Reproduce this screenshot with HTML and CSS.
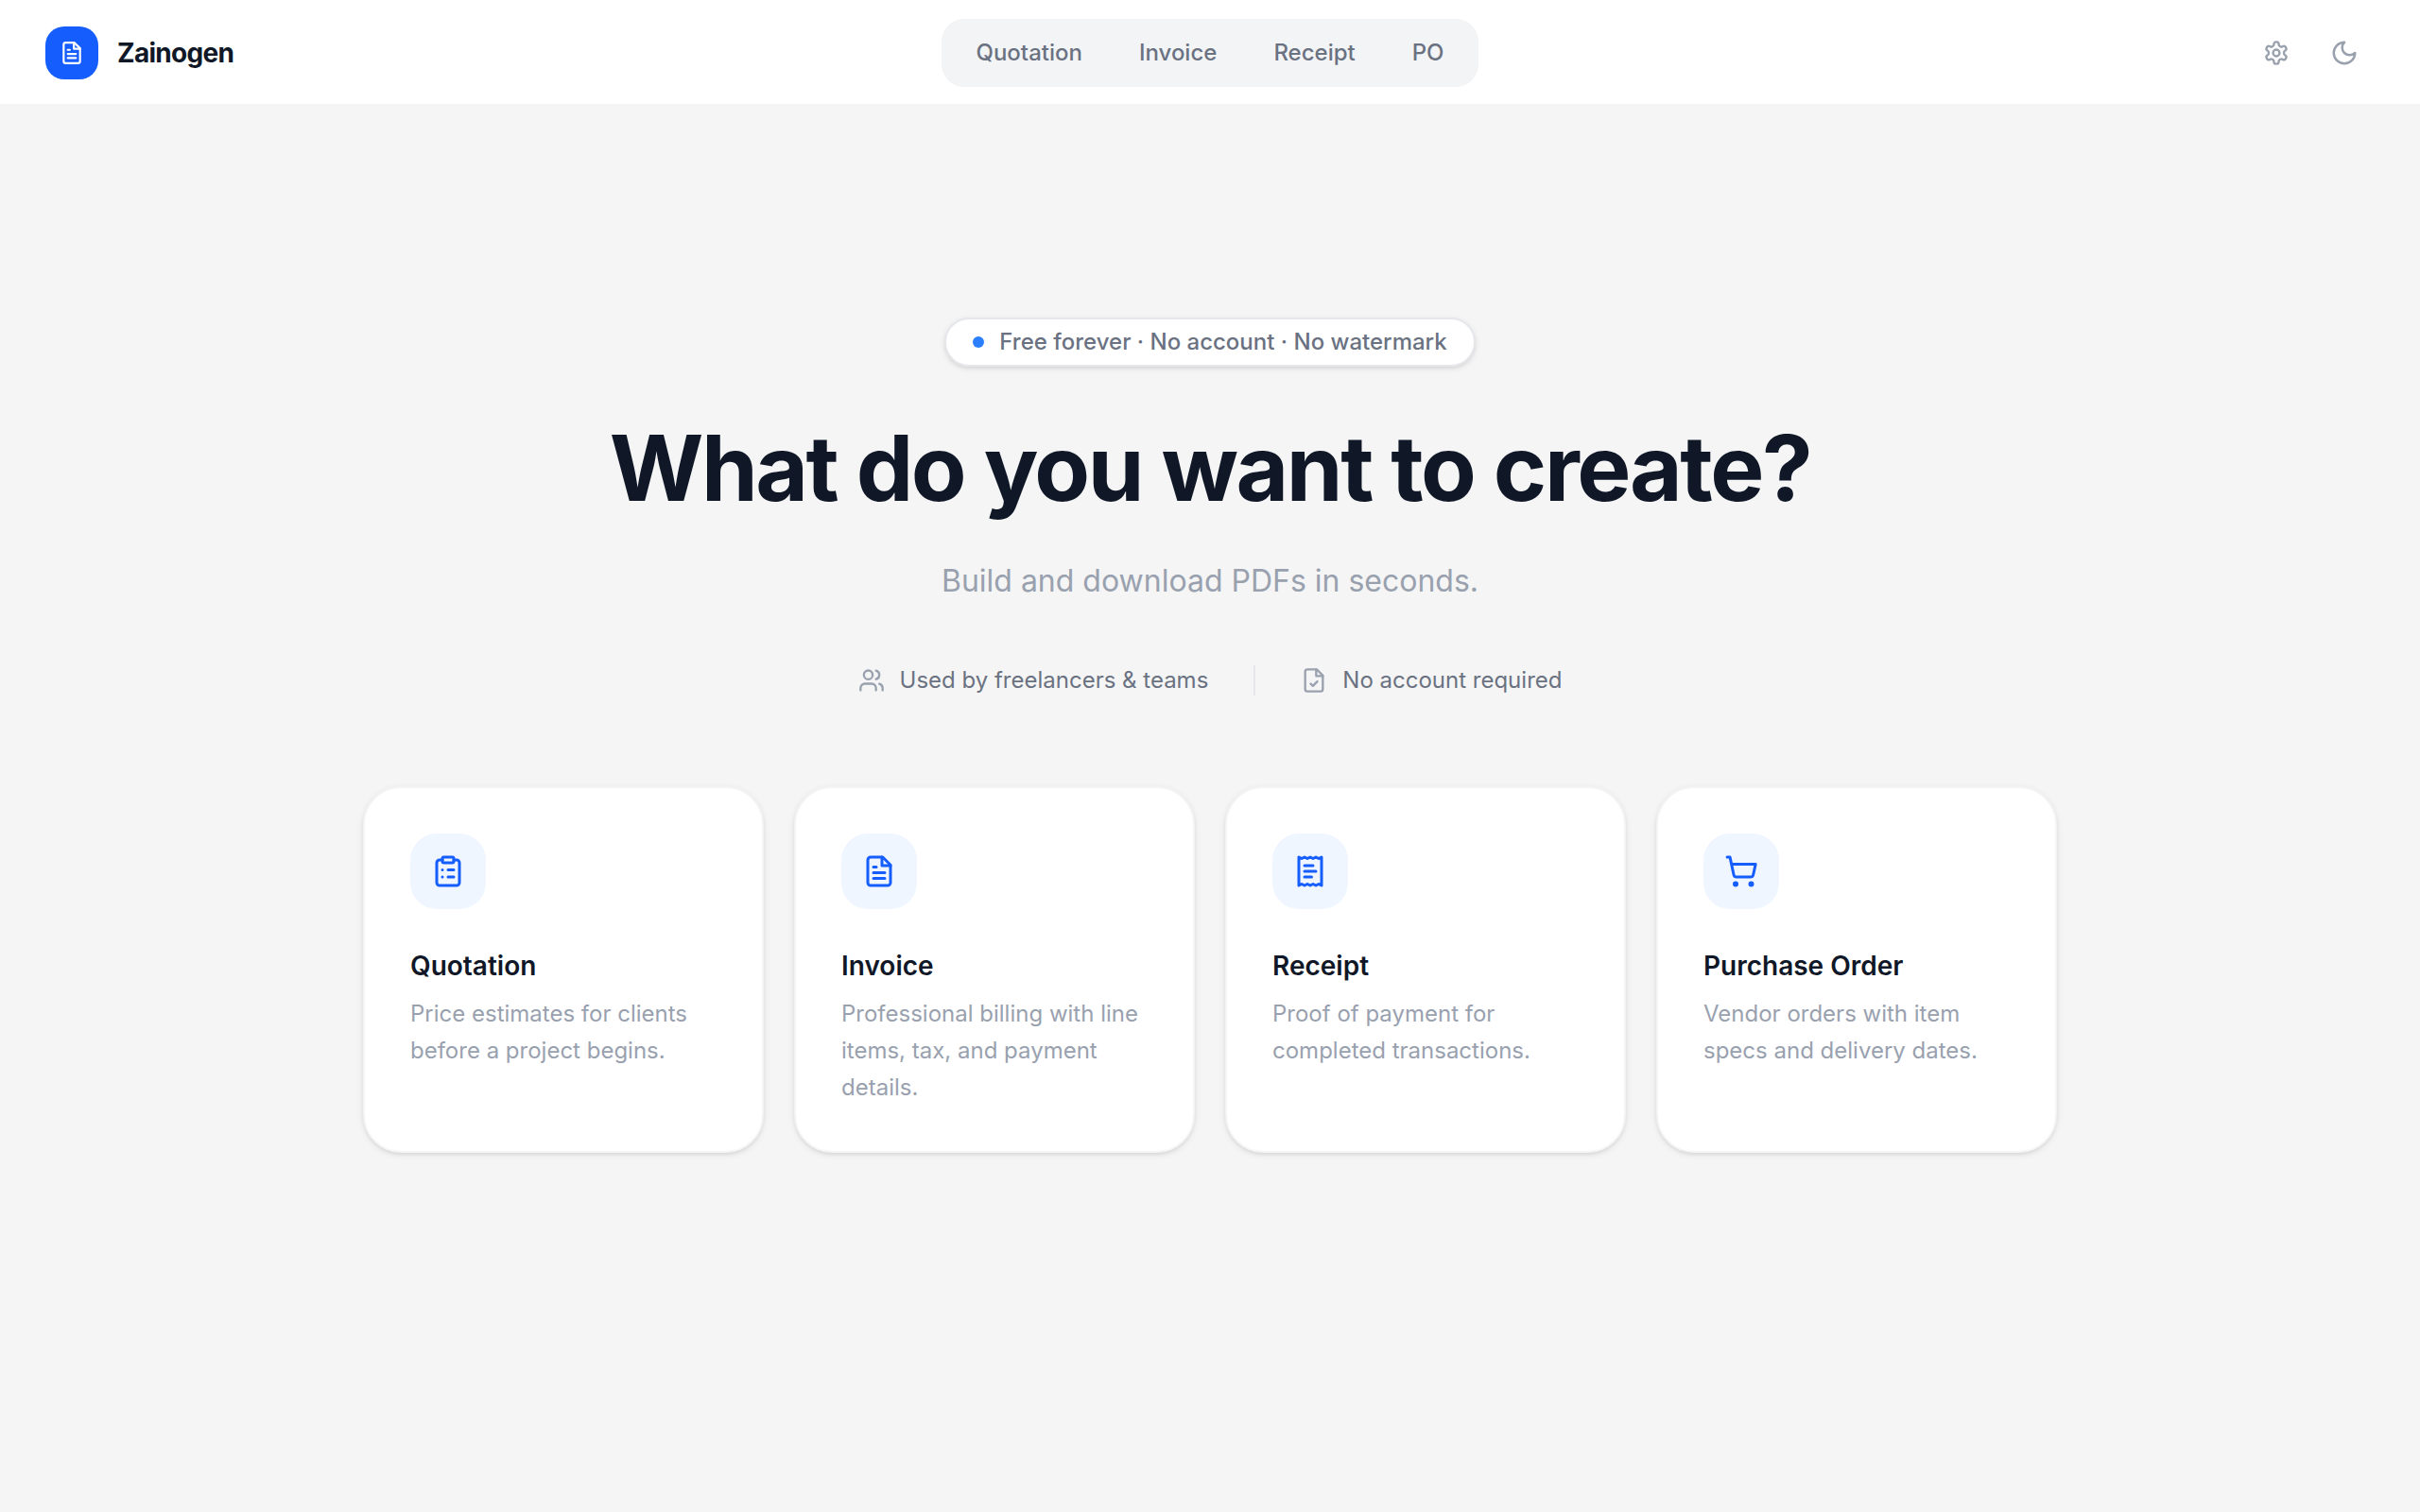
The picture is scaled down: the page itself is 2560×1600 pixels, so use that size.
FILE: index.html
```html
<!DOCTYPE html>
<html lang="en">
<head>
<meta charset="utf-8">
<meta name="viewport" content="width=device-width, initial-scale=1">
<title>Zainogen</title>
<link rel="stylesheet" href="styles.css">
</head>
<body>
<header class="header">
  <a class="brand" href="#">
    <span class="brand-mark">
      <svg class="icon icon-brand" viewBox="0 0 24 24" aria-hidden="true"><path d="M14.5 2H6a2 2 0 0 0-2 2v16a2 2 0 0 0 2 2h12a2 2 0 0 0 2-2V7.5L14.5 2z"/><path d="M14 2v6h6M16 13H8M16 17H8M10 9H8"/></svg>
    </span>
    <span class="brand-name">Zainogen</span>
  </a>
  <nav class="nav">
    <a class="nav-link" href="#quotation">Quotation</a>
    <a class="nav-link" href="#invoice">Invoice</a>
    <a class="nav-link" href="#receipt">Receipt</a>
    <a class="nav-link" href="#po">PO</a>
  </nav>
  <div class="actions">
    <button class="icon-button" type="button" aria-label="Settings">
      <svg class="icon icon-small" viewBox="0 0 24 24" aria-hidden="true"><path d="M12.22 2h-.44a2 2 0 0 0-2 2v.18a2 2 0 0 1-1 1.73l-.43.25a2 2 0 0 1-2 0l-.15-.08a2 2 0 0 0-2.73.73l-.22.38a2 2 0 0 0 .73 2.73l.15.1a2 2 0 0 1 1 1.72v.51a2 2 0 0 1-1 1.74l-.15.09a2 2 0 0 0-.73 2.73l.22.38a2 2 0 0 0 2.73.73l.15-.08a2 2 0 0 1 2 0l.43.25a2 2 0 0 1 1 1.73V20a2 2 0 0 0 2 2h.44a2 2 0 0 0 2-2v-.18a2 2 0 0 1 1-1.73l.43-.25a2 2 0 0 1 2 0l.15.08a2 2 0 0 0 2.73-.73l.22-.39a2 2 0 0 0-.73-2.73l-.15-.08a2 2 0 0 1-1-1.74v-.5a2 2 0 0 1 1-1.74l.15-.09a2 2 0 0 0 .73-2.73l-.22-.38a2 2 0 0 0-2.73-.73l-.15.08a2 2 0 0 1-2 0l-.43-.25a2 2 0 0 1-1-1.73V4a2 2 0 0 0-2-2z"/><circle cx="12" cy="12" r="3"/></svg>
    </button>
    <button class="icon-button" type="button" aria-label="Dark mode">
      <svg class="icon icon-moon" viewBox="0 0 24 24" aria-hidden="true"><path d="M12 3a6 6 0 0 0 9 9 9 9 0 1 1-9-9Z"/></svg>
    </button>
  </div>
</header>

<main class="main">
  <p class="badge"><span class="badge-dot"></span>Free forever · No account · No watermark</p>
  <h1 class="title">What do you want to create?</h1>
  <p class="subtitle">Build and download PDFs in seconds.</p>
  <div class="facts">
    <span class="fact">
      <svg class="icon icon-small" viewBox="0 0 24 24" aria-hidden="true"><path d="M16 21v-2a4 4 0 0 0-4-4H6a4 4 0 0 0-4 4v2"/><circle cx="9" cy="7" r="4"/><path d="M22 21v-2a4 4 0 0 0-3-3.87M16 3.13a4 4 0 0 1 0 7.75"/></svg>
      Used by freelancers &amp; teams
    </span>
    <span class="divider"></span>
    <span class="fact">
      <svg class="icon icon-small" viewBox="0 0 24 24" aria-hidden="true"><path d="M14.5 2H6a2 2 0 0 0-2 2v16a2 2 0 0 0 2 2h12a2 2 0 0 0 2-2V7.5L14.5 2z"/><path d="M14 2v6h6M9 15l2 2 4-4"/></svg>
      No account required
    </span>
  </div>

  <div class="cards">
    <a class="card" href="#quotation">
      <span class="card-icon">
        <svg class="icon icon-card" viewBox="0 0 24 24" aria-hidden="true"><rect width="8" height="4" x="8" y="2" rx="1"/><path d="M16 4h2a2 2 0 0 1 2 2v14a2 2 0 0 1-2 2H6a2 2 0 0 1-2-2V6a2 2 0 0 1 2-2h2M12 11h4M12 16h4M8 11h.01M8 16h.01"/></svg>
      </span>
      <h2 class="card-title">Quotation</h2>
      <p class="card-text">Price estimates for clients before a project begins.</p>
    </a>
    <a class="card" href="#invoice">
      <span class="card-icon">
        <svg class="icon icon-card" viewBox="0 0 24 24" aria-hidden="true"><path d="M14.5 2H6a2 2 0 0 0-2 2v16a2 2 0 0 0 2 2h12a2 2 0 0 0 2-2V7.5L14.5 2z"/><path d="M14 2v6h6M16 13H8M16 17H8M10 9H8"/></svg>
      </span>
      <h2 class="card-title">Invoice</h2>
      <p class="card-text">Professional billing with line items, tax, and payment details.</p>
    </a>
    <a class="card" href="#receipt">
      <span class="card-icon">
        <svg class="icon icon-card" viewBox="0 0 24 24" aria-hidden="true"><path d="M4 2v20l2-1 2 1 2-1 2 1 2-1 2 1 2-1 2 1V2l-2 1-2-1-2 1-2-1-2 1-2-1-2 1ZM14 8H8M16 12H8M13 16H8"/></svg>
      </span>
      <h2 class="card-title">Receipt</h2>
      <p class="card-text">Proof of payment for completed transactions.</p>
    </a>
    <a class="card" href="#po">
      <span class="card-icon">
        <svg class="icon icon-card" viewBox="0 0 24 24" aria-hidden="true"><circle cx="8" cy="21" r="1"/><circle cx="19" cy="21" r="1"/><path d="M2.05 2.05h2l2.66 12.42a2 2 0 0 0 2 1.58h9.78a2 2 0 0 0 1.95-1.57l1.65-7.43H5.12"/></svg>
      </span>
      <h2 class="card-title">Purchase Order</h2>
      <p class="card-text">Vendor orders with item specs and delivery dates.</p>
    </a>
  </div>
</main>
</body>
</html>
```
FILE: styles.css
```css
*, *::before, *::after { box-sizing: border-box; }

body {
  margin: 0;
  min-height: 100vh;
  background: #f5f5f5;
  color: #101828;
  font-family: Inter, "Liberation Sans", sans-serif;
  font-size: 24px;
  line-height: 32px;
}

h1, h2, p { margin: 0; }
a { color: inherit; text-decoration: none; }

.icon {
  display: block;
  flex: none;
  fill: none;
  stroke: currentColor;
  stroke-width: 2;
  stroke-linecap: round;
  stroke-linejoin: round;
}
.icon-brand { width: 26px; height: 26px; }
.icon-small { width: 28px; height: 28px; }
.icon-moon { width: 30px; height: 30px; }
.icon-card { width: 36px; height: 36px; }

.header {
  display: grid;
  grid-template-columns: 1fr auto 1fr;
  align-items: center;
  padding: 20px 48px;
  background: #fff;
  box-shadow: inset 0 -2px #f3f4f6;
}
.brand {
  display: flex;
  align-items: center;
  justify-self: start;
  gap: 20px;
}
.brand-mark {
  display: grid;
  place-items: center;
  width: 56px;
  height: 56px;
  border-radius: 20px;
  background: #155dfc;
  color: #fff;
}
.brand-name {
  font-size: 28px;
  font-weight: 700;
  letter-spacing: -0.025em;
}
.nav {
  display: flex;
  gap: 4px;
  padding: 8px;
  border-radius: 24px;
  background: #f3f4f6;
}
.nav-link {
  padding: 12px 28px;
  border-radius: 16px;
  color: #6a7282;
  font-weight: 500;
}
.actions {
  display: flex;
  justify-self: end;
  gap: 8px;
}
.icon-button {
  display: grid;
  place-items: center;
  width: 64px;
  height: 64px;
  padding: 0;
  border: 0;
  border-radius: 20px;
  background: none;
  color: #99a1af;
  cursor: pointer;
}

.main {
  display: flex;
  flex-direction: column;
  align-items: center;
  padding: 224px 48px;
}
.badge {
  display: flex;
  align-items: center;
  gap: 16px;
  padding: 8px 28px;
  border: 2px solid #e5e7eb;
  border-radius: 26px;
  background: #fff;
  color: #6a7282;
  font-weight: 500;
  box-shadow: 0 2px 6px rgb(0 0 0 / 10%), 0 2px 4px -2px rgb(0 0 0 / 10%);
}
.badge-dot {
  width: 12px;
  height: 12px;
  border-radius: 50%;
  background: #2b7fff;
}
.title {
  margin-top: 56px;
  font-size: 96px;
  font-weight: 700;
  line-height: 102px;
  letter-spacing: -0.025em;
  text-align: center;
}
.subtitle {
  margin-top: 42px;
  color: #99a1af;
  font-size: 32px;
  line-height: 54px;
  text-align: center;
}
.facts {
  display: flex;
  gap: 48px;
  margin-top: 62px;
  color: #6a7282;
}
.fact {
  display: flex;
  align-items: center;
  gap: 16px;
}
.fact .icon { color: #99a1af; }
.divider {
  width: 2px;
  background: #e5e7eb;
}

.cards {
  display: grid;
  grid-template-columns: repeat(4, 1fr);
  gap: 32px;
  width: 100%;
  max-width: 1792px;
  margin-top: 96px;
}
.card {
  padding: 48px;
  border: 2px solid #f3f4f6;
  border-radius: 40px;
  background: #fff;
  box-shadow: 0 2px 6px rgb(0 0 0 / 10%), 0 2px 4px -2px rgb(0 0 0 / 10%);
}
.card-icon {
  display: grid;
  place-items: center;
  width: 80px;
  height: 80px;
  border-radius: 28px;
  background: #eff6ff;
  color: #155dfc;
}
.card-title {
  margin-top: 40px;
  font-size: 28px;
  font-weight: 600;
  line-height: 40px;
}
.card-text {
  margin-top: 11px;
  color: #99a1af;
  line-height: 39px;
}
```
